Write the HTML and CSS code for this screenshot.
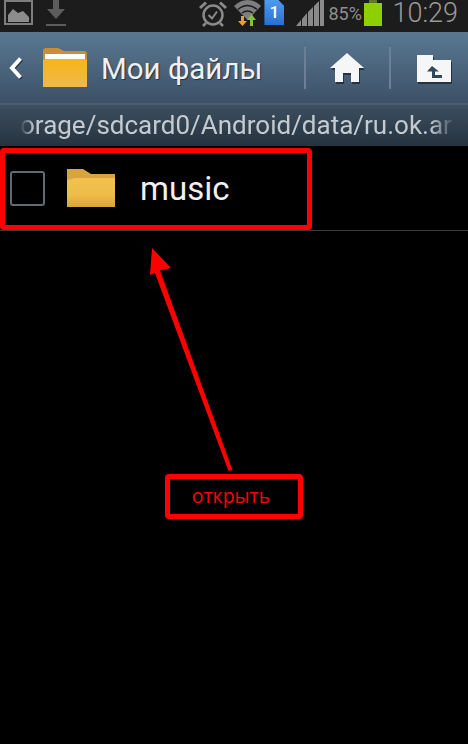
FILE: index.html
```html
<!DOCTYPE html>
<html lang="en">
<head>
    <meta charset="UTF-8">
    <meta name="viewport" content="width=device-width, initial-scale=1.0">
    <title>Мои файлы</title>
    <link rel="stylesheet" href="styles.css">
</head>
<body>
    <div class="phone">
        <div class="status-bar">
            <div class="status-left">
                <svg class="icon-picture" width="29" height="26" viewBox="0 0 29 26">
                    <rect x="1" y="1" width="27" height="23" fill="none" stroke="#7d7d7d" stroke-width="2"/>
                    <path d="M4 22V15L9 9L14 13L19 11L25 17V22Z" fill="#8c8c8c"/>
                </svg>
                <svg class="icon-download" width="22" height="27" viewBox="0 0 22 27">
                    <path d="M8 0H14V9H20L11 19L2 9H8Z" fill="#5c5c5c"/>
                    <rect x="1" y="24" width="20" height="2" fill="#5c5c5c"/>
                </svg>
            </div>
            <div class="status-right">
                <svg class="icon-alarm" width="28" height="26" viewBox="0 0 28 26">
                    <circle cx="14" cy="14" r="9.5" fill="none" stroke="#8a8a8a" stroke-width="2.5"/>
                    <path d="M1 7L7 1.500M27 7L21 1.500" stroke="#8a8a8a" stroke-width="3" fill="none"/>
                    <path d="M9.500 14L13 17.500L18 10.500" stroke="#8a8a8a" stroke-width="2" fill="none"/>
                    <path d="M7 22L4 25M21 22L24 25" stroke="#8a8a8a" stroke-width="2.500" fill="none"/>
                </svg>
                <svg class="icon-wifi" width="27" height="26" viewBox="0 0 27 26">
                    <path d="M0 6C8 -2 19 -2 27 6L13.500 20Z" fill="#7e7e7e"/>
                    <path d="M4 9.500C10 4.500 17 4.500 23 9.500M8 13C11.500 10.500 15.500 10.500 19 13" stroke="#1c1c1c" stroke-width="1.500" fill="none"/>
                    <path d="M7 16H10V21H13L8.500 26L4 21H7Z" fill="#f0a020"/>
                    <path d="M19 26H16V20H13L17.500 14L22 20H19Z" fill="#86c232"/>
                </svg>
                <div class="sim-badge">1</div>
                <svg class="icon-signal" width="29" height="26" viewBox="0 0 29 26">
                    <path d="M0 26L5 20V26ZM6 26V19L11 13V26ZM12 26V12L17 7V26ZM18 26V6L23 1V26ZM24 26V0H28V26Z" fill="#8a8a8a"/>
                </svg>
                <span class="battery-level">85%</span>
                <div class="battery">
                    <div class="battery-cap"></div>
                    <div class="battery-body"></div>
                </div>
                <span class="clock">10:29</span>
            </div>
        </div>

        <div class="action-bar">
            <svg class="icon-back" width="15" height="24" viewBox="0 0 15 24">
                <path d="M12.500 2.500L4 12L12.500 21.500" fill="none" stroke="#fff" stroke-width="4"/>
            </svg>
            <svg class="icon-app-folder" width="46" height="42" viewBox="0 0 46 42">
                <path d="M1 4Q1 1 4 1H16L22 4H42Q45 4 45 7V40H1Z" fill="#c98f35"/>
                <rect x="3" y="7" width="40" height="6" fill="#fff"/>
                <path d="M1 13L3 12H43L45 13V39Q45 40 44 40H2Q1 40 1 39Z" fill="url(#appFolderFill)"/>
                <defs>
                    <linearGradient id="appFolderFill" x1="0" y1="0" x2="0" y2="1">
                        <stop offset="0" stop-color="#f7b515"/>
                        <stop offset="1" stop-color="#efb84f"/>
                    </linearGradient>
                </defs>
            </svg>
            <span class="action-title">Мои файлы</span>
            <div class="action-divider"></div>
            <div class="action-btn action-btn-home">
                <svg width="36" height="32" viewBox="0 0 36 32">
                    <path d="M18 1L35 16H30V30H22V21H14V30H6V16H1Z" fill="#f5f6f8"/>
                </svg>
            </div>
            <div class="action-divider"></div>
            <div class="action-btn action-btn-up">
                <svg width="36" height="30" viewBox="0 0 36 30">
                    <path d="M1 1H17V6H35V28H1Z" fill="#f5f6f8"/>
                    <path d="M16 12L23 17.500H19V21H26V24H16V17.500H11Z" fill="#33475a"/>
                </svg>
            </div>
        </div>

        <div class="path-bar">
            <span class="path-text">orage/sdcard0/Android/data/ru.ok.ar</span>
        </div>

        <div class="file-row">
            <div class="checkbox"></div>
            <svg class="icon-row-folder" width="50" height="40" viewBox="0 0 50 40">
                <path d="M1 1H17L25 6H49V39H1Z" fill="#dba33f"/>
                <path d="M1 12L9 10H49V39H1Z" fill="url(#rowFolderFill)"/>
                <defs>
                    <linearGradient id="rowFolderFill" x1="0" y1="0" x2="0" y2="1">
                        <stop offset="0" stop-color="#f3c24c"/>
                        <stop offset="0.6" stop-color="#eebc48"/>
                        <stop offset="1" stop-color="#dca335"/>
                    </linearGradient>
                </defs>
            </svg>
            <span class="file-name">music</span>
        </div>

        <div class="mark-row"></div>
        <svg class="mark-arrow" width="468" height="744" viewBox="0 0 468 744">
            <path d="M152 248L171 268L160 270.500L232.500 470L228.500 471L155 273L150 275Z" fill="#ff0000"/>
        </svg>
        <div class="mark-label">открыть</div>
    </div>
</body>
</html>
```

FILE: styles.css
```css
* {
    box-sizing: border-box;
}
html, body {
    margin: 0;
    background-color: #000;
}
.phone {
    position: relative;
    width: 468px;
    height: 744px;
    overflow: hidden;
    font-family: Roboto, "Noto Sans", sans-serif;
    background-color: #000;
}
.status-bar {
    display: flex;
    justify-content: space-between;
    height: 32px;
    padding-left: 4px;
    background-color: #1c1c1c;
}
.status-left {
    display: flex;
    align-items: flex-start;
    gap: 12px;
}
.status-right {
    display: flex;
    align-items: flex-start;
    padding-right: 10px;
}
.icon-alarm {
    margin-top: 1px;
    margin-right: 7px;
}
.icon-wifi {
    margin-right: 3px;
}
.sim-badge {
    width: 20px;
    height: 25px;
    margin-right: 12px;
    color: #fff;
    font-size: 17px;
    font-weight: 500;
    line-height: 25px;
    text-align: center;
    background: linear-gradient(#4c9cee, #2a6fd0);
    clip-path: polygon(0 0, 70% 0, 100% 25%, 100% 100%, 0 100%);
}
.battery-level {
    width: 36px;
    margin-left: 3px;
    color: #8e8e8e;
    font-size: 18px;
    line-height: 27px;
}
.battery {
    display: flex;
    flex-direction: column;
    align-items: center;
    width: 18px;
    margin-right: 10px;
}
.battery-cap {
    width: 8px;
    height: 3px;
    background-color: #5e7a20;
}
.battery-body {
    width: 18px;
    height: 23px;
    background-color: #8fce00;
}
.clock {
    color: #9a9a9a;
    font-size: 27px;
    font-weight: 300;
    line-height: 26px;
}
.action-bar {
    display: flex;
    align-items: center;
    height: 71px;
    background: linear-gradient(#5a7892, #3c5167);
}
.icon-back {
    margin-left: 8px;
    margin-right: 19px;
    filter: drop-shadow(1px 1px 0 #26323e);
}
.icon-app-folder {
    margin-right: 13px;
}
.action-title {
    flex: 1;
    padding-top: 2px;
    color: #eef0f2;
    font-size: 29.5px;
    text-shadow: 1px 1px 1px #26323e;
}
.action-divider {
    width: 2px;
    height: 42px;
    background-color: #6b8096;
}
.action-btn {
    display: flex;
    justify-content: center;
}
.action-btn-home {
    width: 83px;
    padding-right: 2px;
}
.action-btn-up {
    width: 77px;
    padding-left: 8px;
    padding-top: 2px;
}
.action-btn svg {
    filter: drop-shadow(1px 2px 0 #26323e);
}
.path-bar {
    height: 43px;
    padding-left: 20px;
    overflow: hidden;
    white-space: nowrap;
    background: linear-gradient(#3c4e5f, #25333f);
    border-top: 2px solid #4b5f72;
}
.path-text {
    display: block;
    width: 436px;
    overflow: hidden;
    color: #c4cacf;
    font-size: 26px;
    line-height: 40px;
    -webkit-mask-image: linear-gradient(90deg, transparent 0, #000 14px, #000 410px, transparent 100%);
    mask-image: linear-gradient(90deg, transparent 0, #000 14px, #000 410px, transparent 100%);
}
.file-row {
    display: flex;
    align-items: center;
    height: 85px;
    padding-left: 10px;
    border-bottom: 1px solid #3a3a3a;
}
.checkbox {
    width: 35px;
    height: 35px;
    margin-right: 21px;
    border: 2px solid #5e6a74;
    border-radius: 3px;
}
.file-name {
    margin-left: 24px;
    color: #f0f0f0;
    font-size: 33px;
}
.mark-row {
    position: absolute;
    left: 0;
    top: 148px;
    width: 312px;
    height: 82px;
    border: 5px solid #ff0000;
    border-radius: 4px;
}
.mark-arrow {
    position: absolute;
    left: 0;
    top: 0;
}
.mark-label {
    position: absolute;
    left: 165px;
    top: 474px;
    width: 138px;
    height: 45px;
    padding-right: 6px;
    color: #ff0000;
    font-family: "Open Sans", sans-serif;
    font-size: 19.5px;
    line-height: 34px;
    text-align: center;
    border: 5px solid #ff0000;
    border-radius: 4px;
}
```
